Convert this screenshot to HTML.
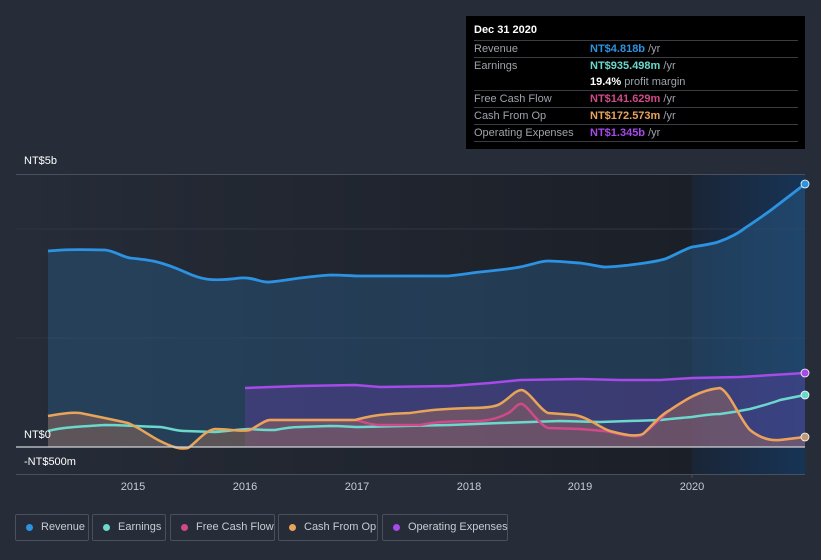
<!DOCTYPE html>
<html><head><meta charset="utf-8"><style>
html,body{margin:0;width:821px;height:560px;overflow:hidden}
body{background:#262c38;font-family:"Liberation Sans",sans-serif;position:relative}
.tt{position:absolute;left:466px;top:16px;width:339px;height:133px;background:#000;color:#fff;font-size:11px}
.tt .h{position:absolute;left:8px;top:8px;font-weight:bold;font-size:11px}
.row{position:absolute;left:8px;width:324px;height:17px;border-top:1px solid #3a3d44;line-height:16px;white-space:nowrap}
.row .l{position:absolute;left:0;color:#9ea3ab}
.row .v{position:absolute;left:116px;font-weight:bold}
.row .v span{color:#9ea3ab;font-weight:normal}
.lg{position:absolute;top:514px;height:27px;border:1px solid #4a505c;border-radius:2px;color:#c8ccd3;font-size:11px;line-height:25px;box-sizing:border-box;white-space:nowrap}
.lg i{position:absolute;left:10px;top:9px;width:7px;height:7px;border-radius:50%}
.lg b{font-weight:normal;position:absolute;left:25px}
.ax{position:absolute;color:#fff;font-size:11px}
.yr{position:absolute;top:481px;color:#c8ccd3;font-size:11px;width:40px;text-align:center}
</style></head><body>
<svg width="821" height="560" style="position:absolute;left:0;top:0">
<defs>
<linearGradient id="bg" x1="0" x2="1" y1="0" y2="0"><stop offset="0" stop-color="#262c38"/><stop offset="1" stop-color="#1b1f27"/></linearGradient>
<linearGradient id="fu" x1="0" x2="1" y1="0" y2="0"><stop offset="0" stop-color="#1a2536"/><stop offset="1" stop-color="#173456"/></linearGradient>
</defs>
<rect x="16" y="174" width="676" height="300" fill="url(#bg)"/>
<rect x="692" y="174" width="113" height="300" fill="url(#fu)"/>
<line x1="16" y1="174.5" x2="805" y2="174.5" stroke="#4a505c"/>
<line x1="16" y1="229" x2="805" y2="229" stroke="#2f3644"/>
<line x1="16" y1="338" x2="805" y2="338" stroke="#2f3644"/>
<line x1="16" y1="474.5" x2="805" y2="474.5" stroke="#4a505c"/>
<path d="M48,251 C60,250 70,249 105,250 C115,251 120,256 130,258 C150,260 160,261 185,272 C200,279 210,282 240,278 C255,277 260,283 270,282 C290,280 300,277 330,275 C345,275 350,276 360,276 L448,276 C460,275 470,273 480,272 C500,270 515,268 520,267 C535,264 540,261 548,261 C560,261 575,263 580,263 C595,265 600,267 605,267 C615,267 620,266 630,265 C645,263 655,262 665,259 C675,255 685,249 692,247 C705,245 712,244 718,242 C730,238 740,232 745,228 C760,218 770,211 775,207 L805,184 L805,447 L48,447 Z" fill="#2a5a85" fill-opacity="0.45"/>
<path d="M245,388 L300,386 L355,385 L380,387 L450,386 L490,383 L520,380 L580,379 L620,380 L660,380 L692,378 L740,377 L805,373 L805,447 L245,447 Z" fill="#6a3fb0" fill-opacity="0.35"/>
<path d="M48,416 C60,414 70,412 80,413 C95,416 110,419 128,423 C140,428 150,436 160,441 C170,446 180,450 188,448 C195,444 205,430 215,429 C230,429 240,432 250,430 C258,426 265,420 270,420 L355,420 C370,416 380,414 410,413 C425,411 435,409 470,408 C485,408 495,407 500,404 C510,398 515,390 522,390 C530,392 540,410 548,413 L575,415 C590,418 600,428 610,431 C625,435 635,437 643,434 C650,428 660,415 670,410 C685,400 700,390 720,388 C730,392 740,420 750,430 C760,438 770,441 780,440 L805,437 L805,447 L48,447 Z" fill="#c07a55" fill-opacity="0.35"/>
<path d="M48,431 C60,428 70,427 105,425 C120,425 130,426 160,427 C170,428 175,431 185,431 L215,432 C230,431 240,429 250,429 C260,430 268,430 275,430 C285,428 295,427 300,427 L330,426 C345,426 350,427 360,427 L450,425 L500,423 L560,421 L600,422 L660,420 C670,419 680,418 692,417 C705,415 715,414 720,414 C735,412 745,410 750,409 C765,405 775,402 780,400 L805,395" fill="none" stroke="#6cd8cc" stroke-width="2.5"/>
<path d="M245,388 L300,386 L355,385 L380,387 L450,386 L490,383 L520,380 L580,379 L620,380 L660,380 L692,378 L740,377 L805,373" fill="none" stroke="#a64ae8" stroke-width="2.5"/>
<path d="M250,430 C258,426 265,420 270,420 L355,420 C365,422 370,425 380,425 L420,425 C430,423 440,421 480,421 C495,420 505,415 510,412 C515,408 518,403 522,404 C528,406 538,424 548,428 L580,429 C595,430 600,431 605,431 C620,434 630,437 640,436 C650,430 660,418 670,410 C685,400 700,390 720,388 C730,392 740,420 750,430 C760,438 770,441 780,440 L805,437" fill="none" stroke="#d04a8a" stroke-width="2.5"/>
<path d="M48,416 C60,414 70,412 80,413 C95,416 110,419 128,423 C140,428 150,436 160,441 C170,446 180,450 188,448 C195,444 205,430 215,429 C230,429 240,432 250,430 C258,426 265,420 270,420 L355,420 C370,416 380,414 410,413 C425,411 435,409 470,408 C485,408 495,407 500,404 C510,398 515,390 522,390 C530,392 540,410 548,413 L575,415 C590,418 600,428 610,431 C625,435 635,437 643,434 C650,428 660,415 670,410 C685,400 700,390 720,388 C730,392 740,420 750,430 C760,438 770,441 780,440 L805,437" fill="none" stroke="#e8a55a" stroke-width="2.5"/>
<path d="M48,251 C60,250 70,249 105,250 C115,251 120,256 130,258 C150,260 160,261 185,272 C200,279 210,282 240,278 C255,277 260,283 270,282 C290,280 300,277 330,275 C345,275 350,276 360,276 L448,276 C460,275 470,273 480,272 C500,270 515,268 520,267 C535,264 540,261 548,261 C560,261 575,263 580,263 C595,265 600,267 605,267 C615,267 620,266 630,265 C645,263 655,262 665,259 C675,255 685,249 692,247 C705,245 712,244 718,242 C730,238 740,232 745,228 C760,218 770,211 775,207 L805,184" fill="none" stroke="#2b93e2" stroke-width="2.8"/>
<line x1="16" y1="447" x2="805" y2="447" stroke="#d0d3d8" stroke-width="1.2"/>
<line x1="692" y1="474" x2="692" y2="478" stroke="#4a505c"/>
<circle cx="805" cy="184" r="4" fill="#2b93e2" stroke="#fff" stroke-width="0.8"/>
<circle cx="805" cy="373" r="4" fill="#a64ae8" stroke="#fff" stroke-width="0.8"/>
<circle cx="805" cy="395" r="4" fill="#6cd8cc" stroke="#fff" stroke-width="0.8"/>
<circle cx="805" cy="437" r="4" fill="#c09a70" stroke="#fff" stroke-width="0.8"/>
</svg>
<div class="ax" style="left:24px;top:155px">NT$5b</div>
<div class="ax" style="left:24px;top:429px">NT$0</div>
<div class="ax" style="left:24px;top:456px">-NT$500m</div>
<div class="yr" style="left:113px">2015</div>
<div class="yr" style="left:225px">2016</div>
<div class="yr" style="left:337px">2017</div>
<div class="yr" style="left:449px">2018</div>
<div class="yr" style="left:560px">2019</div>
<div class="yr" style="left:672px">2020</div>
<div class="tt">
<div class="h">Dec 31 2020</div>
<div class="row" style="top:24px"><span class="l">Revenue</span><span class="v" style="color:#2b93e2">NT$4.818b <span>/yr</span></span></div>
<div class="row" style="top:41px"><span class="l">Earnings</span><span class="v" style="color:#6cd8cc">NT$935.498m <span>/yr</span></span></div>
<div class="row" style="top:58px;border-top:none"><span class="v" style="color:#fff">19.4% <span>profit margin</span></span></div>
<div class="row" style="top:74px"><span class="l">Free Cash Flow</span><span class="v" style="color:#d04a8a">NT$141.629m <span>/yr</span></span></div>
<div class="row" style="top:91px"><span class="l">Cash From Op</span><span class="v" style="color:#e8a55a">NT$172.573m <span>/yr</span></span></div>
<div class="row" style="top:108px"><span class="l">Operating Expenses</span><span class="v" style="color:#a64ae8">NT$1.345b <span>/yr</span></span></div>
<div class="row" style="top:125px;height:0"></div>
</div>
<div class="lg" style="left:15px;width:74px"><i style="background:#2b93e2"></i><b>Revenue</b></div>
<div class="lg" style="left:92px;width:74px"><i style="background:#6cd8cc"></i><b>Earnings</b></div>
<div class="lg" style="left:170px;width:105px"><i style="background:#d04a8a"></i><b>Free Cash Flow</b></div>
<div class="lg" style="left:278px;width:100px"><i style="background:#e8a55a"></i><b>Cash From Op</b></div>
<div class="lg" style="left:382px;width:126px"><i style="background:#a64ae8"></i><b>Operating Expenses</b></div>
</body></html>
